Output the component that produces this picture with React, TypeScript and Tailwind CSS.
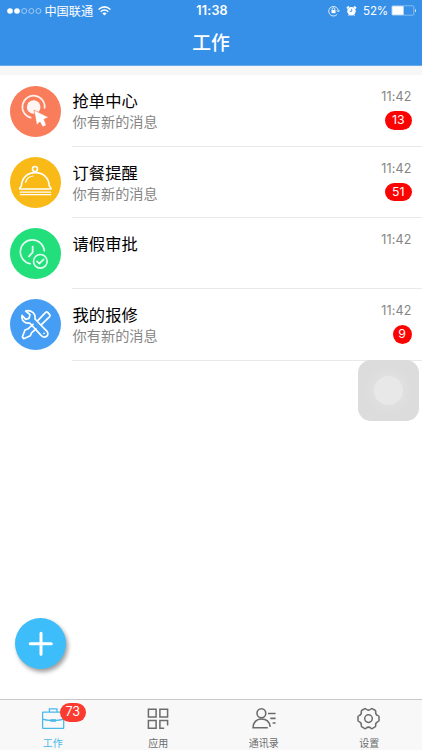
import type { ReactNode } from "react";

const RepeatClick = () => (
  <svg viewBox="31 33 153 153" className="size-[51px]" fill="none">
    <path d="M93 128A33.5 33.5 0 1 1 135 99" stroke="#fff" strokeOpacity=".88" strokeWidth="5" strokeLinecap="round" />
    <circle cx="102" cy="96" r="20.5" fill="#fff" fillOpacity=".93" />
    <path d="M103 105L147 127L133 133L140 151L129 156L121 141L111 150Z" fill="#fff" stroke="#f97c5b" strokeWidth="2" />
  </svg>
);

const Cloche = () => (
  <svg viewBox="31 30 153 153" className="size-[51px]" fill="none" stroke="#fff" strokeWidth="4.8" strokeLinecap="round" strokeLinejoin="round">
    <circle cx="106" cy="66" r="7.5" />
    <path d="M65 117C67 91 84 77 107 77S147 91 149 117L154 124V126H60V124Z" />
    <path d="M78 106C81 95 89 88 100 87" strokeWidth="3.5" />
    <path d="M62 135.5H153M62 143H153" strokeWidth="3.6" />
  </svg>
);

const ClockCheck = () => (
  <svg viewBox="31 30 153 153" className="size-[51px]" fill="none" stroke="#e4fff2" strokeWidth="4.8" strokeLinecap="round" strokeLinejoin="round">
    <path d="M92 137A36 36 0 1 1 134 99" />
    <path d="M99 86V103L88 115" strokeWidth="5.5" />
    <circle cx="122" cy="130" r="20.5" />
    <path d="M112 130L119 137L132 124" />
  </svg>
);

const Tools = () => (
  <svg viewBox="31 28 153 153" className="size-[51px]" fill="none" stroke="#fff" strokeWidth="5" strokeLinecap="round" strokeLinejoin="round">
    <path d="M78 64L91 75L88 86L78 89L67 77C65 92 75 103 90 100L125 138C136 148 151 137 142 125L106 88C109 72 94 59 78 64Z" />
    <path d="M115 92L138 68Q141 65 144 68L150 75Q153 78 150 81L126 104M100 104L86 117L76 121L68 142L72 147L92 138L96 129L109 118" />
    <circle cx="133" cy="131" r="1.5" strokeWidth="3" />
  </svg>
);

type Item = { title: string; note?: string; count?: string; tone: string; icon: ReactNode };

const items: Item[] = [
  { title: "抢单中心", note: "你有新的消息", count: "13", tone: "bg-[#f97c5b]", icon: <RepeatClick /> },
  { title: "订餐提醒", note: "你有新的消息", count: "51", tone: "bg-[#f9b917]", icon: <Cloche /> },
  { title: "请假审批", tone: "bg-[#23df7b]", icon: <ClockCheck /> },
  { title: "我的报修", note: "你有新的消息", count: "9", tone: "bg-[#459ef4]", icon: <Tools /> },
];

function Row({ item }: { item: Item }) {
  return (
    <li className="flex h-[71.3px] pl-[10.4px]">
      <div className={`mt-[10.2px] size-[51px] shrink-0 rounded-full ${item.tone}`}>{item.icon}</div>
      <div className="ml-[10.6px] flex flex-1 justify-between border-b border-[#e9e9ea] pr-[10.5px]">
        <div className="pl-[0.6px] pt-[14px]">
          <p className="text-[16.3px] leading-[22px] text-black">{item.title}</p>
          {item.note && <p className="text-[14.2px] leading-[21px] text-[#858585]">{item.note}</p>}
        </div>
        <div className="flex flex-col items-end pt-[14px]">
          <time className="font-[Inter] text-[12.6px] leading-4 tracking-[0.12px] text-[#858585]">11:42</time>
          {item.count && (
            <span className="mt-[6px] flex h-[18.5px] min-w-[18.5px] items-center justify-center rounded-full bg-[#fc0303] px-[5.5px] font-[Inter] text-[12.3px] leading-none text-white">
              <span className={item.count.length > 1 ? "w-[15.5px] text-center" : ""}>{item.count}</span>
            </span>
          )}
        </div>
      </div>
    </li>
  );
}

function StatusBar() {
  return (
    <div className="grid h-[21px] grid-cols-[1fr_auto_1fr] items-center pl-[7px] pr-[5px] text-white">
      <div className="flex items-center">
        <svg width="35" height="8" viewBox="0 0 35 8" fill="none" stroke="#fff">
          <circle cx="3" cy="4" r="2.8" fill="#fff" stroke="none" />
          <circle cx="10" cy="4" r="2.8" fill="#fff" stroke="none" />
          <circle cx="17.2" cy="4" r="2.5" strokeWidth=".5" />
          <circle cx="24.3" cy="4" r="2.5" strokeWidth=".5" />
          <circle cx="31.4" cy="4" r="2.5" strokeWidth=".5" />
        </svg>
        <span className="ml-[2.4px] text-[12.2px] leading-5">中国联通</span>
        <svg className="ml-[5px]" width="13" height="10" viewBox="0 0 13 10" fill="none" stroke="#fff" strokeWidth="1.5">
          <path d="M.6 3.5Q6.5-1.7 12.4 3.5M2.7 5.7Q6.5 2.3 10.3 5.7" />
          <path d="M4.3 7.3Q6.5 5.6 8.7 7.3L6.5 9.6Z" fill="#fff" stroke="none" />
        </svg>
      </div>
      <span className="font-[Inter] text-[12.5px] font-semibold leading-5 tracking-[0.2px]">11:38</span>
      <div className="flex items-center justify-end">
        <svg width="12" height="12" viewBox="0 0 12 12" fill="none" stroke="#fff" strokeWidth=".8">
          <path d="M9.2 9.3A4.8 4.8 0 1 1 10.3 6M8.8 5.4L10.3 7L11.8 5.4" />
          <rect x="3.5" y="5" width="4" height="3.2" fill="#fff" stroke="none" />
          <path d="M4.2 5V4a1.3 1.3 0 0 1 2.6 0v1" />
        </svg>
        <svg className="ml-[6px]" width="11" height="12" viewBox="0 0 11 12" fill="none" stroke="#fff">
          <circle cx="5.5" cy="6.2" r="4.2" fill="#fff" stroke="none" />
          <path d="M.9 3.4L3 1.5M10.1 3.4L8 1.5" strokeWidth="1.7" />
          <path d="M2.5 10.8L3.5 9.5M8.5 10.8L7.5 9.5" />
          <path d="M5.7 3.8V6.4H3.7" stroke="#3690e8" strokeWidth=".9" />
        </svg>
        <span className="ml-[6px] font-[Inter] text-[11.6px] leading-5 tracking-[-0.2px]">52%</span>
        <svg className="ml-[3px]" width="26" height="11" viewBox="0 0 26 11">
          <rect x=".8" y=".8" width="22" height="9.4" rx="1" fill="none" stroke="#fff" strokeOpacity=".65" strokeWidth=".6" />
          <rect x="1.2" y="1.2" width="11.4" height="8.6" fill="#fff" />
          <path d="M24 3.5V7.5Q25.6 5.5 24 3.5" fill="#fff" />
        </svg>
      </div>
    </div>
  );
}

const tabIcon = "h-[24px] w-[28px]";

function TabBar() {
  return (
    <nav className="grid h-[51px] shrink-0 grid-cols-4 border-t border-[#c9c9cb] bg-[#f8f8f9] text-[10px] leading-[14px] text-[#6c6c6c]">
      <a className="flex flex-col items-center pt-[7px] text-[#48b8e9]">
        <span className="relative">
          <svg className={tabIcon} viewBox="0 0 28 24" fill="none" stroke="currentColor" strokeWidth="1.25">
            <rect x="3.6" y="5.2" width="21.1" height="16.2" rx=".5" />
            <path d="M10.4 5V1.9H18V5M3.6 12.1Q7 13.2 11 13.4H17Q21 13.2 24.7 12.1" />
            <rect x="11.4" y="12.2" width="5.5" height="2.6" fill="currentColor" stroke="none" />
          </svg>
          <span className="absolute left-[21px] top-[-4px] flex h-[18.5px] w-[26px] items-center justify-center rounded-full bg-[#fb3b30] font-[Inter] text-[12.6px] leading-none text-white">73</span>
        </span>
        <span className="mt-[5px]">工作</span>
      </a>
      <a className="flex flex-col items-center pt-[7px]">
        <svg className={tabIcon} viewBox="0 0 28 24" fill="none" stroke="currentColor" strokeWidth="1.5">
          <path d="M4.4 2.2H12.1V9.9H4.4ZM15.9 2.2H23.6V9.9H15.9ZM4.4 13.6H12.1V21.3H4.4ZM20.2 21.3H15.9V13.6H23.6V18.4" />
        </svg>
        <span className="mt-[5px]">应用</span>
      </a>
      <a className="flex flex-col items-center pt-[7px]">
        <svg className={tabIcon} viewBox="0 0 28 24" fill="none" stroke="currentColor" strokeWidth="1.6">
          <ellipse cx="11.4" cy="6.3" rx="4.4" ry="4.6" />
          <path d="M17.8 20.8H3.1C3.1 15.5 6.4 12 11.3 12C16.3 12 19.6 15.2 20.3 19.8M18 6.5H25.6M20.3 11.4H25.6M22.6 16H25.6" />
        </svg>
        <span className="mt-[5px]">通讯录</span>
      </a>
      <a className="flex flex-col items-center pt-[7px]">
        <svg className={tabIcon} viewBox="0 0 28 24" fill="none" stroke="currentColor" strokeWidth="1.5" strokeLinejoin="round">
          <path d="M9.8 1.6Q10.4 1.4 11 2Q13.5 4.2 16 2Q16.6 1.4 17.2 1.6L20.4 3.5Q20.9 4 20.7 4.8Q20.2 7.6 23 8.6Q24 8.9 24 9.6V13.6Q24 14.3 23 14.6Q20.2 15.6 20.7 18.4Q20.9 19.2 20.4 19.7L17.2 21.6Q16.6 21.8 16 21.2Q13.5 19 11 21.2Q10.4 21.8 9.8 21.6L6.6 19.7Q6.1 19.2 6.3 18.4Q6.8 15.6 4 14.6Q3 14.3 3 13.6V9.6Q3 8.9 4 8.6Q6.8 7.6 6.3 4.8Q6.1 4 6.6 3.5Z" />
          <circle cx="13.5" cy="11.6" r="3.8" />
        </svg>
        <span className="mt-[5px]">设置</span>
      </a>
    </nav>
  );
}

export default function App() {
  return (
    <div className="relative flex h-[750px] w-[422px] flex-col overflow-hidden bg-white font-['Noto_Sans_CJK_SC',sans-serif]">
      <header className="h-[66px] shrink-0 border-b border-[#6aaae9] bg-[#3690e8]">
        <StatusBar />
        <h1 className="text-center text-[18.8px] font-medium leading-[42px] text-white">工作</h1>
      </header>
      <main className="flex flex-1 flex-col">
        <div className="h-[9.4px] bg-[#f7f7f8]" />
        <ul>
          {items.map((item) => (
            <Row key={item.title} item={item} />
          ))}
        </ul>
      </main>
      <button aria-label="新建" className="absolute left-[15px] top-[618px] flex size-[51px] items-center justify-center rounded-full bg-[#3dbdf9] shadow-[2px_3px_4px_rgba(0,0,0,0.38)]">
        <svg width="26" height="26" viewBox="0 0 26 26" stroke="#fff" strokeWidth="3" strokeLinecap="round">
          <path d="M13 2.2V23.3M2.2 12.8H23.3" />
        </svg>
      </button>
      <div className="absolute left-[358.4px] top-[360px] flex size-[61px] items-center justify-center rounded-[13px] bg-[#dcdcdc]">
        <div className="size-[29px] rounded-full bg-[#e8e8e8] shadow-[0_0_7px_5px_#e0e0e0]" />
      </div>
      <TabBar />
    </div>
  );
}
